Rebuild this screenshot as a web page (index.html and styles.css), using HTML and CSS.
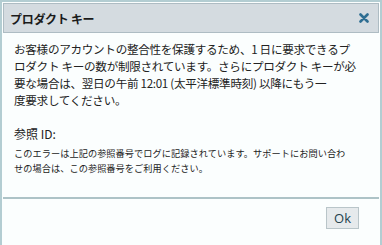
FILE: index.html
```html
<!DOCTYPE html>
<html lang="ja">
<head>
<meta charset="utf-8">
<link rel="stylesheet" href="styles.css">
</head>
<body>
<div class="dialog">
  <div class="header">
    <span class="title">プロダクト キー</span>
    <span class="close" aria-label="close">
      <svg width="10" height="10" viewBox="0 0 10 10"><path d="M1.5 1.5 L8.5 8.5 M8.5 1.5 L1.5 8.5" stroke="#2e6e92" stroke-width="2.6" stroke-linecap="round"/></svg>
    </span>
  </div>
  <div class="content">
    <p class="message">お客様のアカウントの整合性を保護するため、1 日に要求できるプ<br>ロダクト キーの数が制限されています。さらにプロダクト キーが必<br>要な場合は、翌日の午前 12:01 (太平洋標準時刻) 以降にもう一<br>度要求してください。</p>
    <p class="ref">参照 ID:</p>
    <p class="note">このエラーは上記の参照番号でログに記録されています。サポートにお問い合わ<br>せの場合は、この参照番号をご利用ください。</p>
  </div>
  <div class="footer">
    <button class="ok">Ok</button>
  </div>
</div>
</body>
</html>
```
FILE: styles.css
```css
html, body {
  margin: 0;
  padding: 0;
  background: #fbfefe;
}
body {
  font-family: "Noto Sans CJK JP", "Liberation Sans", sans-serif;
  color: #1a1a1a;
}
.dialog {
  width: 382px;
  height: 245px;
  box-sizing: border-box;
  border: 2px solid #b3cdd2;
  border-bottom: none;
  padding: 1px 1px 0 1px;
  background: #fbfefe;
  display: flex;
  flex-direction: column;
}
.header {
  height: 30px;
  box-sizing: border-box;
  background: #d4dbe0;
  border: 1px solid #aebcc3;
  display: flex;
  align-items: center;
  justify-content: space-between;
  padding: 0 9px 0 6px;
}
.title {
  font-size: 12px;
  font-weight: bold;
  color: #1b1b1b;
  letter-spacing: -0.3px;
}
.close {
  display: flex;
  width: 10px;
  height: 10px;
}
.content {
  padding: 8px 4px 0 11px;
  flex: 1;
  white-space: nowrap;
}
.message {
  margin: 0;
  font-size: 11.6px;
  letter-spacing: -0.3px;
  line-height: 17px;
  color: #222;
}
.ref {
  margin: 16px 0 0 0;
  font-size: 12px;
  line-height: 17px;
  color: #222;
}
.note {
  margin: 4px 0 0 0;
  font-size: 9.2px;
  letter-spacing: 0.05px;
  line-height: 15px;
  color: #222;
}
.footer {
  border-top: 2px solid #adc3c7;
  height: 48px;
  flex: none;
  box-sizing: border-box;
  display: flex;
  justify-content: flex-end;
  align-items: flex-start;
  padding: 8px 20px 0 0;
}
.ok {
  width: 33px;
  height: 22px;
  font-family: "Open Sans", "Liberation Sans", sans-serif;
  font-size: 13px;
  color: #243f4d;
  background: #e6eaec;
  border: 1px solid #b9c5c9;
  padding: 0;
}
```
